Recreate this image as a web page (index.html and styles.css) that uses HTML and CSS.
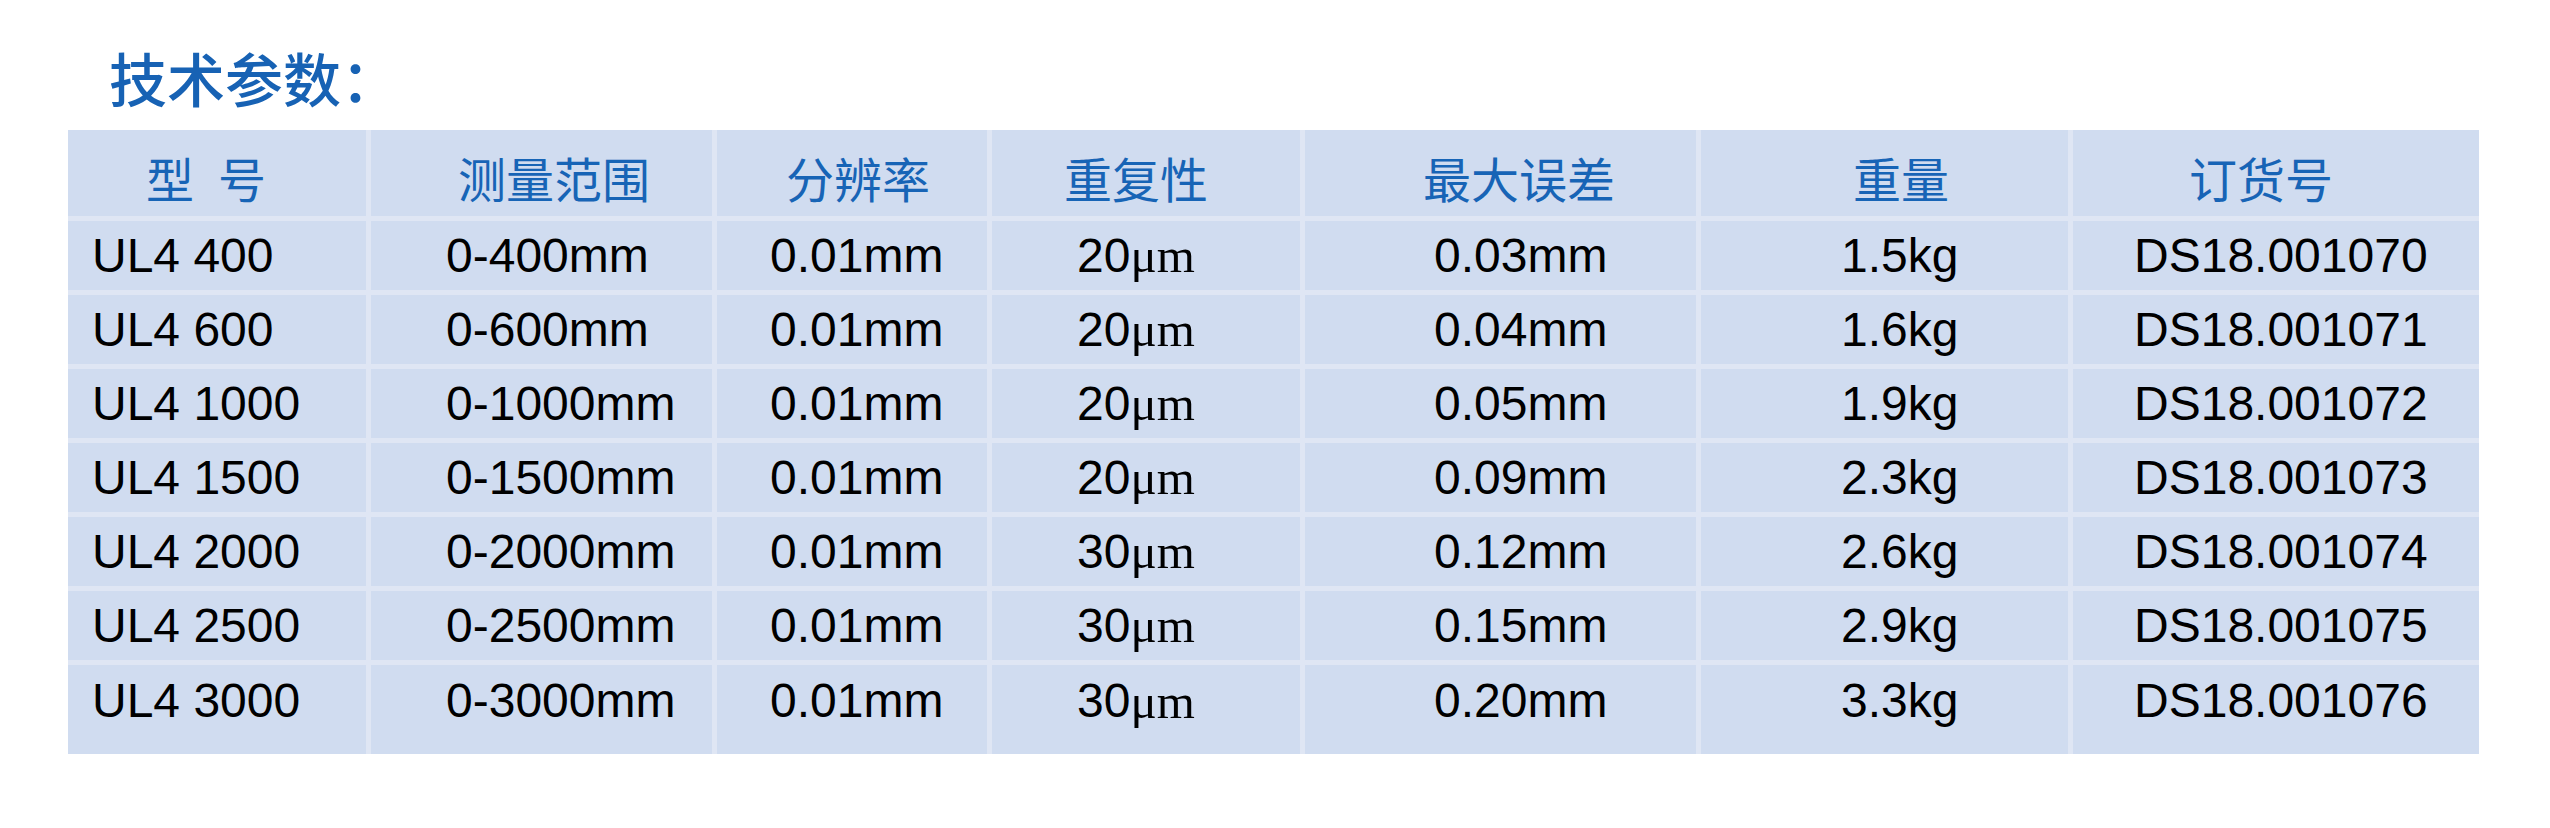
FILE: index.html
```html
<!DOCTYPE html>
<html lang="zh-CN">
<head>
<meta charset="utf-8">
<title>技术参数</title>
<link rel="stylesheet" href="styles.css">
</head>
<body>
<div class="page">
  <h1 class="title">技术参数：</h1>
  <div class="table">
    <div class="row head">
      <div class="cell c1">型&ensp;号</div>
      <div class="cell c2">测量范围</div>
      <div class="cell c3">分辨率</div>
      <div class="cell c4">重复性</div>
      <div class="cell c5">最大误差</div>
      <div class="cell c6">重量</div>
      <div class="cell c7">订货号</div>
    </div>
    <div class="row">
      <div class="cell c1">UL4 400</div>
      <div class="cell c2">0-400mm</div>
      <div class="cell c3">0.01mm</div>
      <div class="cell c4">20<span class="unit">μm</span></div>
      <div class="cell c5">0.03mm</div>
      <div class="cell c6">1.5kg</div>
      <div class="cell c7">DS18.001070</div>
    </div>
    <div class="row">
      <div class="cell c1">UL4 600</div>
      <div class="cell c2">0-600mm</div>
      <div class="cell c3">0.01mm</div>
      <div class="cell c4">20<span class="unit">μm</span></div>
      <div class="cell c5">0.04mm</div>
      <div class="cell c6">1.6kg</div>
      <div class="cell c7">DS18.001071</div>
    </div>
    <div class="row">
      <div class="cell c1">UL4 1000</div>
      <div class="cell c2">0-1000mm</div>
      <div class="cell c3">0.01mm</div>
      <div class="cell c4">20<span class="unit">μm</span></div>
      <div class="cell c5">0.05mm</div>
      <div class="cell c6">1.9kg</div>
      <div class="cell c7">DS18.001072</div>
    </div>
    <div class="row">
      <div class="cell c1">UL4 1500</div>
      <div class="cell c2">0-1500mm</div>
      <div class="cell c3">0.01mm</div>
      <div class="cell c4">20<span class="unit">μm</span></div>
      <div class="cell c5">0.09mm</div>
      <div class="cell c6">2.3kg</div>
      <div class="cell c7">DS18.001073</div>
    </div>
    <div class="row">
      <div class="cell c1">UL4 2000</div>
      <div class="cell c2">0-2000mm</div>
      <div class="cell c3">0.01mm</div>
      <div class="cell c4">30<span class="unit">μm</span></div>
      <div class="cell c5">0.12mm</div>
      <div class="cell c6">2.6kg</div>
      <div class="cell c7">DS18.001074</div>
    </div>
    <div class="row">
      <div class="cell c1">UL4 2500</div>
      <div class="cell c2">0-2500mm</div>
      <div class="cell c3">0.01mm</div>
      <div class="cell c4">30<span class="unit">μm</span></div>
      <div class="cell c5">0.15mm</div>
      <div class="cell c6">2.9kg</div>
      <div class="cell c7">DS18.001075</div>
    </div>
    <div class="row last">
      <div class="cell c1">UL4 3000</div>
      <div class="cell c2">0-3000mm</div>
      <div class="cell c3">0.01mm</div>
      <div class="cell c4">30<span class="unit">μm</span></div>
      <div class="cell c5">0.20mm</div>
      <div class="cell c6">3.3kg</div>
      <div class="cell c7">DS18.001076</div>
    </div>
  </div>
</div>
</body>
</html>
```

FILE: styles.css
```css
html, body {
  margin: 0;
  padding: 0;
  background: #ffffff;
}

.page {
  padding: 40px 0 0 68px;
  font-family: "Liberation Sans", Arial, "Noto Sans CJK SC", sans-serif;
}

.title {
  margin: 0 0 16px 41px;
  font-family: "Noto Sans CJK SC", sans-serif;
  font-size: 58px;
  font-weight: 500;
  line-height: 74px;
  height: 74px;
  color: #1762b4;
}

.table {
  width: 2411px;
  display: flex;
  flex-direction: column;
  gap: 5px;
  background: #dfe6f4;
}

.row {
  display: grid;
  grid-template-columns: 298px 341px 270px 308px 391px 367px 406px;
  gap: 5px;
  height: 69px;
}

.row.head {
  height: 86px;
}

.row.last {
  height: 89px;
}

.cell {
  background: #d0dcf0;
  display: flex;
  align-items: center;
  font-size: 48px;
  color: #000000;
  white-space: nowrap;
}

.row.last .cell {
  align-items: flex-start;
  padding-top: 8px;
  box-sizing: border-box;
}

.unit {
  font-family: "Liberation Serif", "Times New Roman", serif;
  font-size: 49px;
}

.c1 { padding-left: 24px; }
.c2 { padding-left: 75px; }
.c3 { padding-left: 53px; }
.c4 { padding-left: 85px; }
.c5 { padding-left: 129px; }
.c6 { padding-left: 140px; }
.c7 { padding-left: 61px; }

.head .cell {
  font-family: "Noto Sans CJK SC", sans-serif;
  font-size: 48px;
  color: #1764b6;
  padding-top: 8px;
  box-sizing: border-box;
}

.head .c1 { padding-left: 78px; }
.head .c2 { padding-left: 87px; }
.head .c3 { padding-left: 69px; }
.head .c4 { padding-left: 72px; }
.head .c5 { padding-left: 118px; }
.head .c6 { padding-left: 152px; }
.head .c7 { padding-left: 116px; }
```
